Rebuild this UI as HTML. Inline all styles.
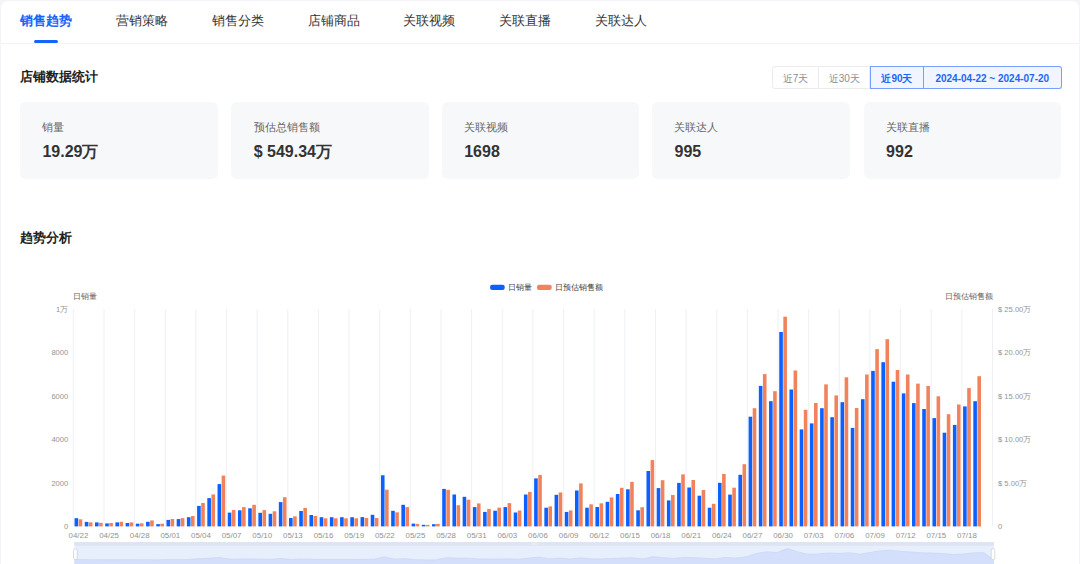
<!DOCTYPE html>
<html><head><meta charset="utf-8">
<style>
*{margin:0;padding:0;box-sizing:border-box}
html,body{width:1080px;height:564px;overflow:hidden;background:#f2f4f8;font-family:"Liberation Sans",sans-serif}
.page{position:absolute;left:1.4px;top:1.2px;width:1077.6px;height:600px;background:#fff;border-radius:7px}
.abs{position:absolute}
.tab{position:absolute;top:12.1px;font-size:13.4px;line-height:18px;color:#333;white-space:nowrap}
.tab.act{color:#1664ff;font-weight:bold}
.uline{position:absolute;left:34.2px;top:39.8px;width:24.2px;height:3px;border-radius:2px;background:#1664ff}
.sep{position:absolute;left:1px;top:43px;width:1078px;height:1.2px;background:#f1f2f5}
.h2{position:absolute;font-size:13.3px;font-weight:bold;color:#222;line-height:18px;white-space:nowrap}
.btns{position:absolute;left:772px;top:66.2px;height:22.6px;display:flex}
.btn{height:22.6px;border:1px solid #ececec;font-size:10px;color:#8c8c8c;display:flex;align-items:center;justify-content:center;background:#fff;padding-top:2.6px;font-weight:500}
.btn:first-child{border-radius:3px 0 0 3px}
.btn:last-child{border-radius:0 3px 3px 0}
.btn+.btn{border-left:none}
.btn.on{border:1px solid #76a0fb;background:#f0f5ff;color:#1d66f5;font-weight:bold}
.card{position:absolute;top:101.9px;width:197.6px;height:76.7px;background:#f7f8fa;border-radius:6px}
.cl{position:absolute;left:22.4px;top:18.5px;font-size:10.5px;line-height:14px;color:#666;white-space:nowrap}
.cv{position:absolute;left:22.4px;top:40px;font-size:16px;line-height:20px;font-weight:bold;color:#333;white-space:nowrap}
svg{position:absolute;left:0;top:0}
.ax{font-size:7.6px;fill:#939393}
.xl{font-size:7.9px}
.an{font-size:7.6px;fill:#666}
.lg{font-size:7.6px;fill:#444}
</style></head><body>
<div class="page"></div>
<div class="tab act" style="left:20.3px">销售趋势</div><div class="tab" style="left:116.3px">营销策略</div><div class="tab" style="left:212.0px">销售分类</div><div class="tab" style="left:307.5px">店铺商品</div><div class="tab" style="left:403.3px">关联视频</div><div class="tab" style="left:499.3px">关联直播</div><div class="tab" style="left:595.3px">关联达人</div>
<div class="uline"></div>
<div class="sep"></div>
<div class="h2" style="left:20px;top:67.5px">店铺数据统计</div>
<div class="btns">
<div class="btn" style="width:47.3px">近7天</div>
<div class="btn" style="width:51px">近30天</div>
<div class="btn on" style="width:53.3px">近90天</div>
<div class="btn on" style="width:138.4px;border-left:none">2024-04-22 ~ 2024-07-20</div>
</div>
<div class="card" style="left:20px"><div class="cl">销量</div><div class="cv">19.29万</div></div><div class="card" style="left:231.3px"><div class="cl">预估总销售额</div><div class="cv">$ 549.34万</div></div><div class="card" style="left:441.8px"><div class="cl">关联视频</div><div class="cv">1698</div></div><div class="card" style="left:652.1px"><div class="cl">关联达人</div><div class="cv">995</div></div><div class="card" style="left:863.7px"><div class="cl">关联直播</div><div class="cv">992</div></div>
<div class="h2" style="left:20px;top:229px">趋势分析</div>
<svg width="1080" height="564" viewBox="0 0 1080 564">
<line x1="73.30" y1="309.0" x2="73.30" y2="526.4" stroke="#eef0f6" stroke-width="1"/>
<line x1="103.94" y1="309.0" x2="103.94" y2="526.4" stroke="#eef0f6" stroke-width="1"/>
<line x1="134.58" y1="309.0" x2="134.58" y2="526.4" stroke="#eef0f6" stroke-width="1"/>
<line x1="165.22" y1="309.0" x2="165.22" y2="526.4" stroke="#eef0f6" stroke-width="1"/>
<line x1="195.86" y1="309.0" x2="195.86" y2="526.4" stroke="#eef0f6" stroke-width="1"/>
<line x1="226.50" y1="309.0" x2="226.50" y2="526.4" stroke="#eef0f6" stroke-width="1"/>
<line x1="257.13" y1="309.0" x2="257.13" y2="526.4" stroke="#eef0f6" stroke-width="1"/>
<line x1="287.77" y1="309.0" x2="287.77" y2="526.4" stroke="#eef0f6" stroke-width="1"/>
<line x1="318.41" y1="309.0" x2="318.41" y2="526.4" stroke="#eef0f6" stroke-width="1"/>
<line x1="349.05" y1="309.0" x2="349.05" y2="526.4" stroke="#eef0f6" stroke-width="1"/>
<line x1="379.69" y1="309.0" x2="379.69" y2="526.4" stroke="#eef0f6" stroke-width="1"/>
<line x1="410.33" y1="309.0" x2="410.33" y2="526.4" stroke="#eef0f6" stroke-width="1"/>
<line x1="440.97" y1="309.0" x2="440.97" y2="526.4" stroke="#eef0f6" stroke-width="1"/>
<line x1="471.61" y1="309.0" x2="471.61" y2="526.4" stroke="#eef0f6" stroke-width="1"/>
<line x1="502.25" y1="309.0" x2="502.25" y2="526.4" stroke="#eef0f6" stroke-width="1"/>
<line x1="532.88" y1="309.0" x2="532.88" y2="526.4" stroke="#eef0f6" stroke-width="1"/>
<line x1="563.52" y1="309.0" x2="563.52" y2="526.4" stroke="#eef0f6" stroke-width="1"/>
<line x1="594.16" y1="309.0" x2="594.16" y2="526.4" stroke="#eef0f6" stroke-width="1"/>
<line x1="624.80" y1="309.0" x2="624.80" y2="526.4" stroke="#eef0f6" stroke-width="1"/>
<line x1="655.44" y1="309.0" x2="655.44" y2="526.4" stroke="#eef0f6" stroke-width="1"/>
<line x1="686.08" y1="309.0" x2="686.08" y2="526.4" stroke="#eef0f6" stroke-width="1"/>
<line x1="716.72" y1="309.0" x2="716.72" y2="526.4" stroke="#eef0f6" stroke-width="1"/>
<line x1="747.36" y1="309.0" x2="747.36" y2="526.4" stroke="#eef0f6" stroke-width="1"/>
<line x1="778.00" y1="309.0" x2="778.00" y2="526.4" stroke="#eef0f6" stroke-width="1"/>
<line x1="808.64" y1="309.0" x2="808.64" y2="526.4" stroke="#eef0f6" stroke-width="1"/>
<line x1="839.27" y1="309.0" x2="839.27" y2="526.4" stroke="#eef0f6" stroke-width="1"/>
<line x1="869.91" y1="309.0" x2="869.91" y2="526.4" stroke="#eef0f6" stroke-width="1"/>
<line x1="900.55" y1="309.0" x2="900.55" y2="526.4" stroke="#eef0f6" stroke-width="1"/>
<line x1="931.19" y1="309.0" x2="931.19" y2="526.4" stroke="#eef0f6" stroke-width="1"/>
<line x1="961.83" y1="309.0" x2="961.83" y2="526.4" stroke="#eef0f6" stroke-width="1"/>
<line x1="992.47" y1="309.0" x2="992.47" y2="526.4" stroke="#eef0f6" stroke-width="1"/>
<rect x="74.56" y="518.20" width="3.6" height="8.20" fill="#0b60ff"/>
<rect x="78.66" y="519.30" width="3.6" height="7.10" fill="#f0835c"/>
<rect x="84.77" y="521.90" width="3.6" height="4.50" fill="#0b60ff"/>
<rect x="88.87" y="522.40" width="3.6" height="4.00" fill="#f0835c"/>
<rect x="94.98" y="522.40" width="3.6" height="4.00" fill="#0b60ff"/>
<rect x="99.08" y="522.80" width="3.6" height="3.60" fill="#f0835c"/>
<rect x="105.20" y="523.40" width="3.6" height="3.00" fill="#0b60ff"/>
<rect x="109.30" y="523.00" width="3.6" height="3.40" fill="#f0835c"/>
<rect x="115.41" y="522.40" width="3.6" height="4.00" fill="#0b60ff"/>
<rect x="119.51" y="521.80" width="3.6" height="4.60" fill="#f0835c"/>
<rect x="125.62" y="523.00" width="3.6" height="3.40" fill="#0b60ff"/>
<rect x="129.72" y="522.40" width="3.6" height="4.00" fill="#f0835c"/>
<rect x="135.83" y="523.70" width="3.6" height="2.70" fill="#0b60ff"/>
<rect x="139.93" y="523.30" width="3.6" height="3.10" fill="#f0835c"/>
<rect x="146.05" y="521.80" width="3.6" height="4.60" fill="#0b60ff"/>
<rect x="150.15" y="520.40" width="3.6" height="6.00" fill="#f0835c"/>
<rect x="156.26" y="524.10" width="3.6" height="2.30" fill="#0b60ff"/>
<rect x="160.36" y="523.70" width="3.6" height="2.70" fill="#f0835c"/>
<rect x="166.47" y="519.90" width="3.6" height="6.50" fill="#0b60ff"/>
<rect x="170.57" y="519.00" width="3.6" height="7.40" fill="#f0835c"/>
<rect x="176.69" y="519.10" width="3.6" height="7.30" fill="#0b60ff"/>
<rect x="180.79" y="518.10" width="3.6" height="8.30" fill="#f0835c"/>
<rect x="186.90" y="517.20" width="3.6" height="9.20" fill="#0b60ff"/>
<rect x="191.00" y="516.00" width="3.6" height="10.40" fill="#f0835c"/>
<rect x="197.11" y="505.90" width="3.6" height="20.50" fill="#0b60ff"/>
<rect x="201.21" y="503.00" width="3.6" height="23.40" fill="#f0835c"/>
<rect x="207.33" y="498.10" width="3.6" height="28.30" fill="#0b60ff"/>
<rect x="211.43" y="494.40" width="3.6" height="32.00" fill="#f0835c"/>
<rect x="217.54" y="484.10" width="3.6" height="42.30" fill="#0b60ff"/>
<rect x="221.64" y="475.60" width="3.6" height="50.80" fill="#f0835c"/>
<rect x="227.75" y="512.60" width="3.6" height="13.80" fill="#0b60ff"/>
<rect x="231.85" y="510.00" width="3.6" height="16.40" fill="#f0835c"/>
<rect x="237.96" y="510.30" width="3.6" height="16.10" fill="#0b60ff"/>
<rect x="242.06" y="507.10" width="3.6" height="19.30" fill="#f0835c"/>
<rect x="248.18" y="508.30" width="3.6" height="18.10" fill="#0b60ff"/>
<rect x="252.28" y="504.80" width="3.6" height="21.60" fill="#f0835c"/>
<rect x="258.39" y="512.80" width="3.6" height="13.60" fill="#0b60ff"/>
<rect x="262.49" y="510.10" width="3.6" height="16.30" fill="#f0835c"/>
<rect x="268.60" y="513.80" width="3.6" height="12.60" fill="#0b60ff"/>
<rect x="272.70" y="511.30" width="3.6" height="15.10" fill="#f0835c"/>
<rect x="278.82" y="502.10" width="3.6" height="24.30" fill="#0b60ff"/>
<rect x="282.92" y="497.20" width="3.6" height="29.20" fill="#f0835c"/>
<rect x="289.03" y="518.00" width="3.6" height="8.40" fill="#0b60ff"/>
<rect x="293.13" y="516.30" width="3.6" height="10.10" fill="#f0835c"/>
<rect x="299.24" y="511.00" width="3.6" height="15.40" fill="#0b60ff"/>
<rect x="303.34" y="507.90" width="3.6" height="18.50" fill="#f0835c"/>
<rect x="309.46" y="515.00" width="3.6" height="11.40" fill="#0b60ff"/>
<rect x="313.56" y="516.00" width="3.6" height="10.40" fill="#f0835c"/>
<rect x="319.67" y="517.20" width="3.6" height="9.20" fill="#0b60ff"/>
<rect x="323.77" y="518.30" width="3.6" height="8.10" fill="#f0835c"/>
<rect x="329.88" y="517.20" width="3.6" height="9.20" fill="#0b60ff"/>
<rect x="333.98" y="518.30" width="3.6" height="8.10" fill="#f0835c"/>
<rect x="340.09" y="517.20" width="3.6" height="9.20" fill="#0b60ff"/>
<rect x="344.19" y="518.30" width="3.6" height="8.10" fill="#f0835c"/>
<rect x="350.31" y="517.20" width="3.6" height="9.20" fill="#0b60ff"/>
<rect x="354.41" y="518.30" width="3.6" height="8.10" fill="#f0835c"/>
<rect x="360.52" y="517.10" width="3.6" height="9.30" fill="#0b60ff"/>
<rect x="364.62" y="518.00" width="3.6" height="8.40" fill="#f0835c"/>
<rect x="370.73" y="514.80" width="3.6" height="11.60" fill="#0b60ff"/>
<rect x="374.83" y="518.00" width="3.6" height="8.40" fill="#f0835c"/>
<rect x="380.95" y="475.30" width="3.6" height="51.10" fill="#0b60ff"/>
<rect x="385.05" y="489.70" width="3.6" height="36.70" fill="#f0835c"/>
<rect x="391.16" y="510.80" width="3.6" height="15.60" fill="#0b60ff"/>
<rect x="395.26" y="512.30" width="3.6" height="14.10" fill="#f0835c"/>
<rect x="401.37" y="504.80" width="3.6" height="21.60" fill="#0b60ff"/>
<rect x="405.47" y="507.10" width="3.6" height="19.30" fill="#f0835c"/>
<rect x="411.59" y="523.60" width="3.6" height="2.80" fill="#0b60ff"/>
<rect x="415.69" y="523.90" width="3.6" height="2.50" fill="#f0835c"/>
<rect x="421.80" y="524.80" width="3.6" height="1.60" fill="#0b60ff"/>
<rect x="425.90" y="524.90" width="3.6" height="1.50" fill="#f0835c"/>
<rect x="432.01" y="524.20" width="3.6" height="2.20" fill="#0b60ff"/>
<rect x="436.11" y="523.90" width="3.6" height="2.50" fill="#f0835c"/>
<rect x="442.22" y="488.90" width="3.6" height="37.50" fill="#0b60ff"/>
<rect x="446.32" y="489.80" width="3.6" height="36.60" fill="#f0835c"/>
<rect x="452.44" y="494.50" width="3.6" height="31.90" fill="#0b60ff"/>
<rect x="456.54" y="505.20" width="3.6" height="21.20" fill="#f0835c"/>
<rect x="462.65" y="496.80" width="3.6" height="29.60" fill="#0b60ff"/>
<rect x="466.75" y="499.70" width="3.6" height="26.70" fill="#f0835c"/>
<rect x="472.86" y="507.10" width="3.6" height="19.30" fill="#0b60ff"/>
<rect x="476.96" y="503.40" width="3.6" height="23.00" fill="#f0835c"/>
<rect x="483.08" y="511.90" width="3.6" height="14.50" fill="#0b60ff"/>
<rect x="487.18" y="508.90" width="3.6" height="17.50" fill="#f0835c"/>
<rect x="493.29" y="510.70" width="3.6" height="15.70" fill="#0b60ff"/>
<rect x="497.39" y="507.60" width="3.6" height="18.80" fill="#f0835c"/>
<rect x="503.50" y="507.10" width="3.6" height="19.30" fill="#0b60ff"/>
<rect x="507.60" y="503.10" width="3.6" height="23.30" fill="#f0835c"/>
<rect x="513.72" y="512.50" width="3.6" height="13.90" fill="#0b60ff"/>
<rect x="517.82" y="510.50" width="3.6" height="15.90" fill="#f0835c"/>
<rect x="523.93" y="494.50" width="3.6" height="31.90" fill="#0b60ff"/>
<rect x="528.03" y="491.90" width="3.6" height="34.50" fill="#f0835c"/>
<rect x="534.14" y="478.40" width="3.6" height="48.00" fill="#0b60ff"/>
<rect x="538.24" y="474.90" width="3.6" height="51.50" fill="#f0835c"/>
<rect x="544.35" y="507.70" width="3.6" height="18.70" fill="#0b60ff"/>
<rect x="548.45" y="506.40" width="3.6" height="20.00" fill="#f0835c"/>
<rect x="554.57" y="494.80" width="3.6" height="31.60" fill="#0b60ff"/>
<rect x="558.67" y="492.40" width="3.6" height="34.00" fill="#f0835c"/>
<rect x="564.78" y="511.90" width="3.6" height="14.50" fill="#0b60ff"/>
<rect x="568.88" y="510.40" width="3.6" height="16.00" fill="#f0835c"/>
<rect x="574.99" y="490.50" width="3.6" height="35.90" fill="#0b60ff"/>
<rect x="579.09" y="483.40" width="3.6" height="43.00" fill="#f0835c"/>
<rect x="585.21" y="507.70" width="3.6" height="18.70" fill="#0b60ff"/>
<rect x="589.31" y="504.30" width="3.6" height="22.10" fill="#f0835c"/>
<rect x="595.42" y="507.00" width="3.6" height="19.40" fill="#0b60ff"/>
<rect x="599.52" y="503.30" width="3.6" height="23.10" fill="#f0835c"/>
<rect x="605.63" y="501.80" width="3.6" height="24.60" fill="#0b60ff"/>
<rect x="609.73" y="497.40" width="3.6" height="29.00" fill="#f0835c"/>
<rect x="615.85" y="494.00" width="3.6" height="32.40" fill="#0b60ff"/>
<rect x="619.95" y="487.80" width="3.6" height="38.60" fill="#f0835c"/>
<rect x="626.06" y="489.30" width="3.6" height="37.10" fill="#0b60ff"/>
<rect x="630.16" y="481.90" width="3.6" height="44.50" fill="#f0835c"/>
<rect x="636.27" y="510.30" width="3.6" height="16.10" fill="#0b60ff"/>
<rect x="640.37" y="507.20" width="3.6" height="19.20" fill="#f0835c"/>
<rect x="646.48" y="471.00" width="3.6" height="55.40" fill="#0b60ff"/>
<rect x="650.58" y="460.10" width="3.6" height="66.30" fill="#f0835c"/>
<rect x="656.70" y="488.10" width="3.6" height="38.30" fill="#0b60ff"/>
<rect x="660.80" y="480.20" width="3.6" height="46.20" fill="#f0835c"/>
<rect x="666.91" y="500.40" width="3.6" height="26.00" fill="#0b60ff"/>
<rect x="671.01" y="495.00" width="3.6" height="31.40" fill="#f0835c"/>
<rect x="677.12" y="482.90" width="3.6" height="43.50" fill="#0b60ff"/>
<rect x="681.22" y="474.40" width="3.6" height="52.00" fill="#f0835c"/>
<rect x="687.34" y="487.50" width="3.6" height="38.90" fill="#0b60ff"/>
<rect x="691.44" y="480.00" width="3.6" height="46.40" fill="#f0835c"/>
<rect x="697.55" y="495.70" width="3.6" height="30.70" fill="#0b60ff"/>
<rect x="701.65" y="490.00" width="3.6" height="36.40" fill="#f0835c"/>
<rect x="707.76" y="507.70" width="3.6" height="18.70" fill="#0b60ff"/>
<rect x="711.86" y="503.80" width="3.6" height="22.60" fill="#f0835c"/>
<rect x="717.98" y="482.80" width="3.6" height="43.60" fill="#0b60ff"/>
<rect x="722.08" y="474.00" width="3.6" height="52.40" fill="#f0835c"/>
<rect x="728.19" y="494.60" width="3.6" height="31.80" fill="#0b60ff"/>
<rect x="732.29" y="487.70" width="3.6" height="38.70" fill="#f0835c"/>
<rect x="738.40" y="474.80" width="3.6" height="51.60" fill="#0b60ff"/>
<rect x="742.50" y="464.20" width="3.6" height="62.20" fill="#f0835c"/>
<rect x="748.61" y="416.70" width="3.6" height="109.70" fill="#0b60ff"/>
<rect x="752.71" y="408.20" width="3.6" height="118.20" fill="#f0835c"/>
<rect x="758.83" y="385.90" width="3.6" height="140.50" fill="#0b60ff"/>
<rect x="762.93" y="374.10" width="3.6" height="152.30" fill="#f0835c"/>
<rect x="769.04" y="401.20" width="3.6" height="125.20" fill="#0b60ff"/>
<rect x="773.14" y="391.20" width="3.6" height="135.20" fill="#f0835c"/>
<rect x="779.25" y="332.00" width="3.6" height="194.40" fill="#0b60ff"/>
<rect x="783.35" y="316.70" width="3.6" height="209.70" fill="#f0835c"/>
<rect x="789.47" y="389.50" width="3.6" height="136.90" fill="#0b60ff"/>
<rect x="793.57" y="370.50" width="3.6" height="155.90" fill="#f0835c"/>
<rect x="799.68" y="429.40" width="3.6" height="97.00" fill="#0b60ff"/>
<rect x="803.78" y="409.80" width="3.6" height="116.60" fill="#f0835c"/>
<rect x="809.89" y="423.40" width="3.6" height="103.00" fill="#0b60ff"/>
<rect x="813.99" y="403.00" width="3.6" height="123.40" fill="#f0835c"/>
<rect x="820.11" y="408.20" width="3.6" height="118.20" fill="#0b60ff"/>
<rect x="824.21" y="384.40" width="3.6" height="142.00" fill="#f0835c"/>
<rect x="830.32" y="417.20" width="3.6" height="109.20" fill="#0b60ff"/>
<rect x="834.42" y="395.40" width="3.6" height="131.00" fill="#f0835c"/>
<rect x="840.53" y="402.20" width="3.6" height="124.20" fill="#0b60ff"/>
<rect x="844.63" y="377.30" width="3.6" height="149.10" fill="#f0835c"/>
<rect x="850.74" y="427.90" width="3.6" height="98.50" fill="#0b60ff"/>
<rect x="854.84" y="408.00" width="3.6" height="118.40" fill="#f0835c"/>
<rect x="860.96" y="399.20" width="3.6" height="127.20" fill="#0b60ff"/>
<rect x="865.06" y="374.50" width="3.6" height="151.90" fill="#f0835c"/>
<rect x="871.17" y="370.90" width="3.6" height="155.50" fill="#0b60ff"/>
<rect x="875.27" y="349.10" width="3.6" height="177.30" fill="#f0835c"/>
<rect x="881.38" y="362.20" width="3.6" height="164.20" fill="#0b60ff"/>
<rect x="885.48" y="339.20" width="3.6" height="187.20" fill="#f0835c"/>
<rect x="891.60" y="381.70" width="3.6" height="144.70" fill="#0b60ff"/>
<rect x="895.70" y="370.00" width="3.6" height="156.40" fill="#f0835c"/>
<rect x="901.81" y="393.40" width="3.6" height="133.00" fill="#0b60ff"/>
<rect x="905.91" y="374.50" width="3.6" height="151.90" fill="#f0835c"/>
<rect x="912.02" y="403.10" width="3.6" height="123.30" fill="#0b60ff"/>
<rect x="916.12" y="383.60" width="3.6" height="142.80" fill="#f0835c"/>
<rect x="922.24" y="409.00" width="3.6" height="117.40" fill="#0b60ff"/>
<rect x="926.34" y="386.00" width="3.6" height="140.40" fill="#f0835c"/>
<rect x="932.45" y="418.10" width="3.6" height="108.30" fill="#0b60ff"/>
<rect x="936.55" y="396.30" width="3.6" height="130.10" fill="#f0835c"/>
<rect x="942.66" y="432.70" width="3.6" height="93.70" fill="#0b60ff"/>
<rect x="946.76" y="414.20" width="3.6" height="112.20" fill="#f0835c"/>
<rect x="952.87" y="424.90" width="3.6" height="101.50" fill="#0b60ff"/>
<rect x="956.97" y="404.50" width="3.6" height="121.90" fill="#f0835c"/>
<rect x="963.09" y="406.40" width="3.6" height="120.00" fill="#0b60ff"/>
<rect x="967.19" y="388.10" width="3.6" height="138.30" fill="#f0835c"/>
<rect x="973.30" y="401.20" width="3.6" height="125.20" fill="#0b60ff"/>
<rect x="977.40" y="376.20" width="3.6" height="150.20" fill="#f0835c"/>
<text x="78.41" y="537.8" text-anchor="middle" class="ax xl">04/22</text>
<text x="109.05" y="537.8" text-anchor="middle" class="ax xl">04/25</text>
<text x="139.68" y="537.8" text-anchor="middle" class="ax xl">04/28</text>
<text x="170.32" y="537.8" text-anchor="middle" class="ax xl">05/01</text>
<text x="200.96" y="537.8" text-anchor="middle" class="ax xl">05/04</text>
<text x="231.60" y="537.8" text-anchor="middle" class="ax xl">05/07</text>
<text x="262.24" y="537.8" text-anchor="middle" class="ax xl">05/10</text>
<text x="292.88" y="537.8" text-anchor="middle" class="ax xl">05/13</text>
<text x="323.52" y="537.8" text-anchor="middle" class="ax xl">05/16</text>
<text x="354.16" y="537.8" text-anchor="middle" class="ax xl">05/19</text>
<text x="384.80" y="537.8" text-anchor="middle" class="ax xl">05/22</text>
<text x="415.44" y="537.8" text-anchor="middle" class="ax xl">05/25</text>
<text x="446.07" y="537.8" text-anchor="middle" class="ax xl">05/28</text>
<text x="476.71" y="537.8" text-anchor="middle" class="ax xl">05/31</text>
<text x="507.35" y="537.8" text-anchor="middle" class="ax xl">06/03</text>
<text x="537.99" y="537.8" text-anchor="middle" class="ax xl">06/06</text>
<text x="568.63" y="537.8" text-anchor="middle" class="ax xl">06/09</text>
<text x="599.27" y="537.8" text-anchor="middle" class="ax xl">06/12</text>
<text x="629.91" y="537.8" text-anchor="middle" class="ax xl">06/15</text>
<text x="660.55" y="537.8" text-anchor="middle" class="ax xl">06/18</text>
<text x="691.19" y="537.8" text-anchor="middle" class="ax xl">06/21</text>
<text x="721.83" y="537.8" text-anchor="middle" class="ax xl">06/24</text>
<text x="752.46" y="537.8" text-anchor="middle" class="ax xl">06/27</text>
<text x="783.10" y="537.8" text-anchor="middle" class="ax xl">06/30</text>
<text x="813.74" y="537.8" text-anchor="middle" class="ax xl">07/03</text>
<text x="844.38" y="537.8" text-anchor="middle" class="ax xl">07/06</text>
<text x="875.02" y="537.8" text-anchor="middle" class="ax xl">07/09</text>
<text x="905.66" y="537.8" text-anchor="middle" class="ax xl">07/12</text>
<text x="936.30" y="537.8" text-anchor="middle" class="ax xl">07/15</text>
<text x="966.94" y="537.8" text-anchor="middle" class="ax xl">07/18</text>
<text x="68.3" y="529.30" text-anchor="end" class="ax">0</text>
<text x="998" y="529.30" class="ax">0</text>
<text x="68.3" y="485.82" text-anchor="end" class="ax">2000</text>
<text x="998" y="485.82" class="ax">$ 5.00万</text>
<text x="68.3" y="442.34" text-anchor="end" class="ax">4000</text>
<text x="998" y="442.34" class="ax">$ 10.00万</text>
<text x="68.3" y="398.86" text-anchor="end" class="ax">6000</text>
<text x="998" y="398.86" class="ax">$ 15.00万</text>
<text x="68.3" y="355.38" text-anchor="end" class="ax">8000</text>
<text x="998" y="355.38" class="ax">$ 20.00万</text>
<text x="68.3" y="311.90" text-anchor="end" class="ax">1万</text>
<text x="998" y="311.90" class="ax">$ 25.00万</text>
<text x="73.2" y="299.2" class="an">日销量</text>
<text x="993.3" y="299.2" text-anchor="end" class="an">日预估销售额</text>
<rect x="490.1" y="284.7" width="14.6" height="5.3" rx="2" fill="#0b60ff"/>
<text x="508.4" y="290.1" class="lg">日销量</text>
<rect x="537" y="284.7" width="14.7" height="5.3" rx="2" fill="#f0835c"/>
<text x="555.2" y="290.1" class="lg">日预估销售额</text>
<rect x="74.4" y="542.0" width="919.6" height="40" fill="#e7eefc"/>
<rect x="74.4" y="542.0" width="919.6" height="3.8" fill="#dee4f1"/>
<polygon points="74.4,575.0 74.4,559.5 84.7,559.7 95.1,559.8 105.4,559.8 115.7,559.8 126.1,559.8 136.4,559.8 146.7,559.7 157.1,559.9 167.4,559.6 177.7,559.6 188.1,559.5 198.4,558.8 208.7,558.3 219.1,557.5 229.4,559.2 239.7,559.0 250.1,558.9 260.4,559.2 270.7,559.3 281.1,558.6 291.4,559.5 301.7,559.1 312.0,559.3 322.4,559.5 332.7,559.5 343.0,559.5 353.4,559.5 363.7,559.4 374.0,559.3 384.4,557.0 394.7,559.1 405.0,558.7 415.4,559.8 425.7,559.9 436.0,559.9 446.4,557.8 456.7,558.1 467.0,558.2 477.4,558.9 487.7,559.1 498.0,559.1 508.4,558.9 518.7,559.2 529.0,558.1 539.4,557.2 549.7,558.9 560.0,558.1 570.4,559.1 580.7,557.9 591.0,558.9 601.4,558.9 611.7,558.5 622.0,558.1 632.4,557.8 642.7,559.0 653.0,556.7 663.4,557.7 673.7,558.5 684.0,557.4 694.4,557.7 704.7,558.2 715.0,558.9 725.4,557.4 735.7,558.1 746.0,556.9 756.4,553.5 766.7,551.7 777.0,552.6 787.3,548.5 797.7,551.9 808.0,554.3 818.3,553.9 828.7,553.0 839.0,553.5 849.3,552.7 859.7,554.2 870.0,552.5 880.3,550.8 890.7,550.3 901.0,551.4 911.3,552.1 921.7,552.7 932.0,553.1 942.3,553.6 952.7,554.5 963.0,554.0 973.3,552.9 983.7,552.6 994.0,560.0 994.0,575.0" fill="#d4e0fb"/>
<polyline points="74.4,559.5 84.7,559.7 95.1,559.8 105.4,559.8 115.7,559.8 126.1,559.8 136.4,559.8 146.7,559.7 157.1,559.9 167.4,559.6 177.7,559.6 188.1,559.5 198.4,558.8 208.7,558.3 219.1,557.5 229.4,559.2 239.7,559.0 250.1,558.9 260.4,559.2 270.7,559.3 281.1,558.6 291.4,559.5 301.7,559.1 312.0,559.3 322.4,559.5 332.7,559.5 343.0,559.5 353.4,559.5 363.7,559.4 374.0,559.3 384.4,557.0 394.7,559.1 405.0,558.7 415.4,559.8 425.7,559.9 436.0,559.9 446.4,557.8 456.7,558.1 467.0,558.2 477.4,558.9 487.7,559.1 498.0,559.1 508.4,558.9 518.7,559.2 529.0,558.1 539.4,557.2 549.7,558.9 560.0,558.1 570.4,559.1 580.7,557.9 591.0,558.9 601.4,558.9 611.7,558.5 622.0,558.1 632.4,557.8 642.7,559.0 653.0,556.7 663.4,557.7 673.7,558.5 684.0,557.4 694.4,557.7 704.7,558.2 715.0,558.9 725.4,557.4 735.7,558.1 746.0,556.9 756.4,553.5 766.7,551.7 777.0,552.6 787.3,548.5 797.7,551.9 808.0,554.3 818.3,553.9 828.7,553.0 839.0,553.5 849.3,552.7 859.7,554.2 870.0,552.5 880.3,550.8 890.7,550.3 901.0,551.4 911.3,552.1 921.7,552.7 932.0,553.1 942.3,553.6 952.7,554.5 963.0,554.0 973.3,552.9 983.7,552.6 994.0,560.0" fill="none" stroke="#c9d8f8" stroke-width="0.8"/>
<rect x="73.6" y="548.8" width="3.6" height="10.8" rx="1.5" fill="#fff" stroke="#c5ccd9" stroke-width="0.7"/>
<rect x="991.2" y="548.8" width="3.6" height="10.8" rx="1.5" fill="#fff" stroke="#c5ccd9" stroke-width="0.7"/>
<rect x="531.5" y="542.8" width="5.5" height="2.2" rx="0.8" fill="#e9ecf6"/>
</svg>
</body></html>
